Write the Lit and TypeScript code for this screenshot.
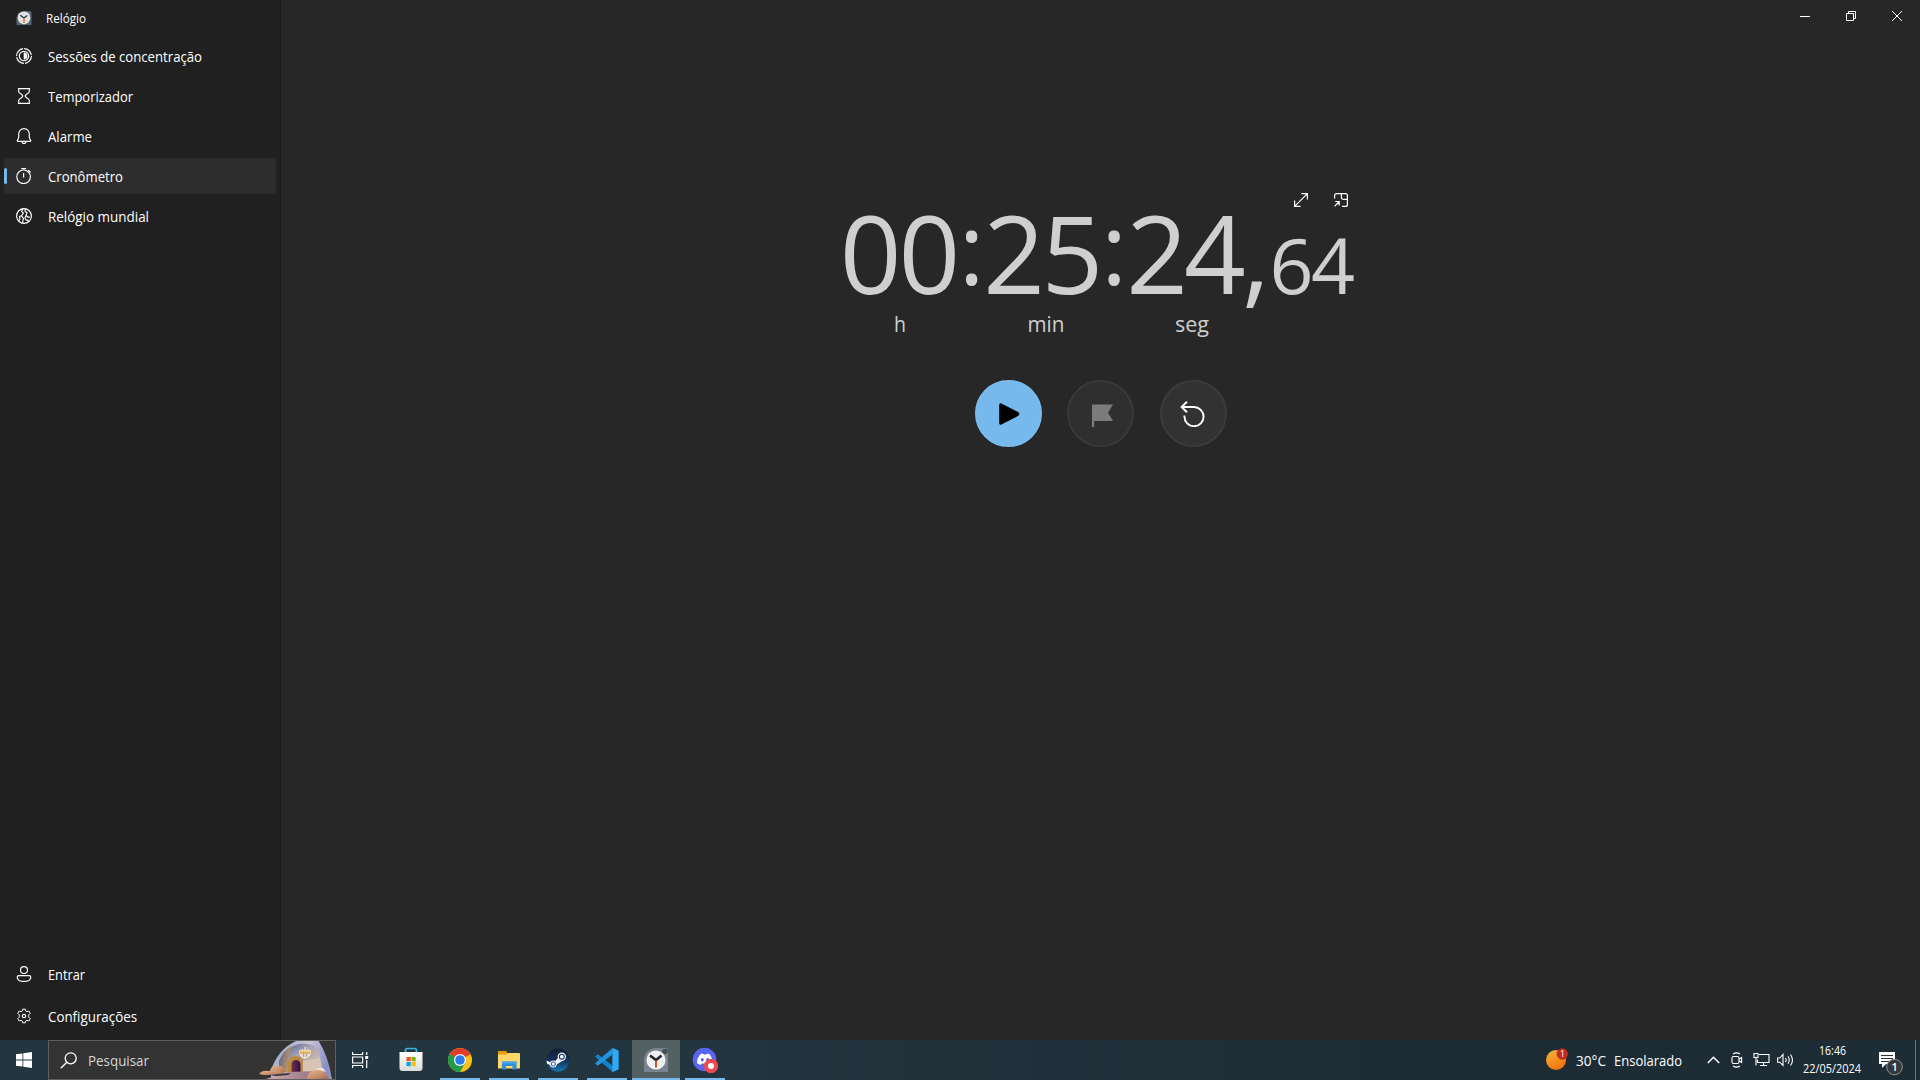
import { LitElement, html, svg, css } from "lit";
import { customElement, property, state } from "lit/decorators.js";
import { classMap } from "lit/directives/class-map.js";

const textStyles = css`
  .tx { display: block; overflow: visible; flex: none; }
  .tx text { font-family: "Open Sans", "Noto Sans", sans-serif; fill: #fff; }
`;

/* A line of text fitted to a fixed advance width. */
const line = (value: string, width: number, size: number) => {
  const h = Math.round(size * 1.4);
  return html`<svg class="tx" width=${width} height=${h}>
    <text x="0" y=${Math.round(size * 1.07)} font-size=${size} textLength=${width} lengthAdjust="spacingAndGlyphs">${value}</text>
  </svg>`;
};

const navIcons: Record<string, unknown> = {
  focus: svg`<circle cx="8" cy="8" r="7.400" stroke-dasharray="10.5 1.1"/><circle cx="8" cy="8" r="4.700"/><path d="M8 4.800a3.200 3.200 0 0 1 0 6.400z" fill="#fff" stroke="#fff" stroke-width=".6"/>`,
  timer: svg`<path d="M2 .6h12M2 15.400h12M2.700.6v2.600q0 1 .8 1.700L6.300 7q1 1 0 2l-2.800 2.100q-.8.700-.8 1.700v2.600M13.300.6v2.600q0 1-.8 1.700L9.700 7q-1 1 0 2l2.800 2.100q.8.700.8 1.700v2.600"/>`,
  alarm: svg`<path d="M8 .6a5.300 5.300 0 0 0-5.300 5.300v3.600L1.300 12.700q-.2.600.5.600h12.400q.7 0 .5-.600L13.300 9.500V5.900A5.300 5.300 0 0 0 8 .6zM6 13.500a2 2 0 0 0 4 0"/>`,
  stopwatch: svg`<circle cx="7.600" cy="8.800" r="6.800"/><path d="M5.300.6h4.800M7.600 5v4.400M12.200 2l2.400 2.400"/>`,
  world: svg`<circle cx="8" cy="8" r="7.400"/><path d="M7 .8 5.600 3.400 7.400 5 5.500 7.800 3.600 8.500 3.800 11 2.700 13M5.500 7.800l1.900 2.500L6.500 15M9.500.8 9 3.300l2 1.500-.9 2.700 2.200 1.900 1.500-.5M10.100 7.500 8.900 10l1.300 2.200 1.600-.2.500 1.700"/>`,
  user: svg`<circle cx="8" cy="4.100" r="3.500"/><path d="M3 9.600h10q1.800 0 1.800 1.600 0 4.200-6.800 4.200T1.200 11.200Q1.200 9.600 3 9.600z"/>`,
  settings: svg`<circle cx="8" cy="8" r="1.700"/><path d="M6.700 1.100h2.600l.5 2 1.100.6 2-.7 1.300 2.300-1.500 1.500v2.400l1.500 1.500-1.300 2.300-2-.7-1.100.6-.5 2H6.700l-.5-2-1.100-.6-2 .7-1.300-2.300 1.500-1.500V6.800L1.800 5.300 3.100 3l2 .7 1.100-.6z" stroke-width=".95"/>`,
};

interface NavEntry { icon: string; text: string; width: number }

@customElement("nav-entry")
class NavEntryElement extends LitElement {
  static styles = [textStyles, css`
    :host { display: block; }
    .row { height: 36px; width: 272px; margin-left: 4px; border-radius: 4px; display: flex; align-items: center; box-sizing: border-box; }
    .row.active { background: #2d2d2d; }
    .mark { width: 3px; height: 16px; border-radius: 1.5px; flex: none; }
    .active .mark { background: #76b9ed; }
    .icon { width: 16px; height: 16px; margin: 0 16px 0 9px; fill: none; stroke: #fff; stroke-width: 1.15; flex: none; }
    .label { padding-top: 2px; }
  `];
  @property({ attribute: false }) entry!: NavEntry;
  @property({ type: Boolean }) active = false;
  render() {
    return html`<div class=${classMap({ row: true, active: this.active })}>
      <span class="mark"></span>
      <svg class="icon" viewBox="0 0 16 16">${navIcons[this.entry.icon]}</svg>
      <div class="label">${line(this.entry.text, this.entry.width, 14)}</div>
    </div>`;
  }
}

@customElement("side-bar")
class SideBar extends LitElement {
  static styles = [textStyles, css`
    :host { display: flex; flex-direction: column; width: 281px; background: #202020; border-right: 1px solid #1d1d1d; flex: none; box-sizing: border-box; }
    .title { height: 38px; display: flex; align-items: flex-start; padding: 10px 0 0 16px; gap: 14px; box-sizing: border-box; }
    .logo { width: 16px; height: 16px; }
    .list { display: flex; flex-direction: column; gap: 4px; }
    .foot { margin-top: auto; display: flex; flex-direction: column; gap: 6px; padding-bottom: 6px; }
  `];
  views: NavEntry[] = [
    { icon: "focus", text: "Sessões de concentração", width: 154 },
    { icon: "timer", text: "Temporizador", width: 85 },
    { icon: "alarm", text: "Alarme", width: 44 },
    { icon: "stopwatch", text: "Cronômetro", width: 75 },
    { icon: "world", text: "Relógio mundial", width: 101 },
  ];
  account: NavEntry[] = [
    { icon: "user", text: "Entrar", width: 37 },
    { icon: "settings", text: "Configurações", width: 89 },
  ];
  @state() current = "Cronômetro";
  render() {
    return html`
      <div class="title">
        <svg class="logo" viewBox="0 0 16 16">
          <path d="M.5 15V8A7.500 7.500 0 0 1 8 1h6q1.500 0 1.500 2v12z" fill="#56646f"/>
          <circle cx="8" cy="7.800" r="6.400" fill="#dfe1e3"/>
          <path d="M4.300 5.300 8 8l3.200-2.500" fill="none" stroke="#2b3036" stroke-width="1.300"/>
          <path d="M8 8v5" stroke="#e0703f" stroke-width="1.500"/>
        </svg>
        ${line("Relógio", 40, 12)}
      </div>
      <div class="list">
        ${this.views.map((e) => html`<nav-entry .entry=${e} ?active=${e.text === this.current}></nav-entry>`)}
      </div>
      <div class="foot">${this.account.map((e) => html`<nav-entry .entry=${e}></nav-entry>`)}</div>`;
  }
}

const glyphs = (value: string, xs: string, width: number, size: number, base = 80) => html`
  <svg class="tx" width=${width} height="96">
    <text class="num" x=${xs} y=${base} font-size=${size} text-anchor="middle">${value}</text>
  </svg>`;

@customElement("stopwatch-view")
class StopwatchView extends LitElement {
  static styles = [textStyles, css`
    :host { display: flex; flex-direction: column; flex: 1; background: #272727; }
    .caption { display: flex; justify-content: flex-end; height: 153px; }
    .caption svg { width: 46px; height: 32px; fill: none; stroke: #fff; stroke-width: 1; }
    .watch { width: 519px; margin: 0 auto; display: flex; flex-direction: column; }
    .tools { display: flex; justify-content: flex-end; gap: 26px; height: 61px; padding-right: 12px; box-sizing: border-box; align-items: flex-end; }
    .tools svg { width: 14px; height: 14px; margin-bottom: 7px; fill: none; stroke: #fff; stroke-width: 1.2; }
    .digits { display: flex; height: 96px; }
    .tx .num, .tx .unit { fill: #cfcfcf; }
    .units { display: flex; margin-left: -14.5px; }
    .controls { display: flex; gap: 25.5px; justify-content: center; padding: 36px 0 0 0; }
    .btn { width: 67px; height: 67px; border-radius: 50%; box-sizing: border-box; background: #323232; border: 2px solid #3b3b3b; display: flex; align-items: center; justify-content: center; padding: 0; flex: none; }
    .btn svg { width: 26px; height: 26px; flex: none; }
    .play { background: #76b9ed; border-color: #7abbed; }
    .lap { background: #2f2f2f; border-color: #393939; }
  `];
  render() {
    return html`
      <div class="caption">
        <svg viewBox="0 0 46 32"><path d="M18 16.500h10"/></svg>
        <svg viewBox="0 0 46 32"><path d="M18.500 13.500h7v7h-7zM20.500 13.500v-2h7v7h-2"/></svg>
        <svg viewBox="0 0 46 32"><path d="m18 11 10 10M28 11 18 21"/></svg>
      </div>
      <div class="watch">
        <div class="tools">
          <svg viewBox="0 0 14 14"><path d="M.6 13.400 13.400.6M7.400.6h6v6M.6 7.400v6h6"/></svg>
          <svg viewBox="0 0 14 14"><path d="M.6 5.500V2.600q0-2 2-2h8.800q2 0 2 2v8.800q0 2-2 2H8M7.400.6v4q0 1.800 1.800 1.800h4.200M1.200 8.500h4v4M5.200 8.500.6 13.400"/></svg>
        </div>
        <div class="digits">
          ${glyphs("00", "29.5 88.5", 118, 108)}
          ${glyphs(":", "12.5", 25, 98, 71)}
          ${glyphs("25", "30 88.5", 118, 108)}
          ${glyphs(":", "12", 25, 98, 71)}
          ${glyphs("24", "30 88", 118, 108)}
          ${glyphs(",", "11", 26, 108)}
          ${glyphs("64", "20.5 62", 83, 77)}
        </div>
        <div class="units">
          ${[["h", 12], ["min", 37], ["seg", 34]].map(([u, w]) => html`
            <svg class="tx" width="146" height="34"><text class="unit" x=${73 - Number(w) / 2} y="22" font-size="22.5" textLength=${w} lengthAdjust="spacingAndGlyphs">${u}</text></svg>`)}
        </div>
        <div class="controls">
          <button class="btn play"><svg viewBox="0 0 26 26"><path d="M4.200 3.900v18.200q0 2.400 2.200 1.400l17-8.800q1.800-1.700 0-3.400L6.400 2.500Q4.200 1.500 4.200 3.900z"/></svg></button>
          <button class="btn lap"><svg viewBox="0 0 26 26"><path d="M4 3.500h21l-5 8.300 5 8.200H6.200v7.700H4z" fill="#7b7b7b"/></svg></button>
          <button class="btn reset"><svg viewBox="0 0 26 26" fill="none" stroke="#fff" stroke-width="1.900"><path d="M7 .8 1.600 6 7 11.200M1.600 6H14a9.600 9.600 0 1 1-9.600 9.600v-1"/></svg></button>
        </div>
      </div>`;
  }
}

const appIcons: Record<string, unknown> = {
  store: svg`<defs><linearGradient id="s" x2="0" y2="1"><stop stop-color="#fff"/><stop offset="1" stop-color="#dcdcdc"/></linearGradient></defs>
    <path d="M7.500 6V3.500q0-2 2-2h7q2 0 2 2V6" fill="none" stroke="#35b8ea" stroke-width="1.700"/>
    <path d="M1.500 5h23v16q0 3-3 3h-17q-3 0-3-3z" fill="url(#s)"/>
    <path d="M8.500 10h4.200v4.200H8.500z" fill="#f25022"/><path d="M13.500 10h4.200v4.200h-4.200z" fill="#7fba00"/>
    <path d="M8.500 15h4.200v4.200H8.500z" fill="#00a4ef"/><path d="M13.500 15h4.200v4.200h-4.200z" fill="#ffb900"/>`,
  chrome: svg`<circle cx="13" cy="13" r="12" fill="#fbc116"/>
    <path d="M13 13 2.600 7A12 12 0 0 1 23.400 7z" fill="#e33b2e"/><path d="M13 7h10.400L13 13z" fill="#e33b2e"/>
    <path d="M2.600 7A12 12 0 0 0 13 25l5.200-9L13 13z" fill="#229a49"/><path d="M2.600 7 7.800 16 13 13z" fill="#229a49"/>
    <circle cx="13" cy="13" r="6" fill="#fff"/><circle cx="13" cy="13" r="4.800" fill="#2a7af0"/>`,
  files: svg`<path d="M2 4h8l1.500 2H22q1 0 1 1v4H2z" fill="#e29b0d"/><path d="M2 7.500h8.500L12 6h11q1 0 1 1v14.500H2z" fill="#ffd667"/>
    <path d="M6 22.500v-8h14.500v8h-4V19h-6.500v3.500z" fill="#2f8fdc"/><path d="M6 14.500h14.500v2H6z" fill="#46a9ee"/>`,
  steam: svg`<defs><linearGradient id="m" x2="0" y2="1"><stop stop-color="#131b34"/><stop offset=".55" stop-color="#12345c"/><stop offset="1" stop-color="#1679b5"/></linearGradient></defs>
    <circle cx="13" cy="13" r="11.500" fill="url(#m)"/><path d="M1.600 13.600 8 16.500l5.400-5.900 5.400 2.500-7 4.500A3.600 3.600 0 0 1 5 18L1.900 16.500z" fill="#f3f5f8"/>
    <circle cx="16.800" cy="9.700" r="4.200" fill="#f3f5f8"/><circle cx="16.800" cy="9.700" r="2.400" fill="#f3f5f8" stroke="#17345b" stroke-width="1.100"/>
    <circle cx="8.300" cy="17" r="3.400" fill="#f3f5f8"/><circle cx="8.300" cy="17" r="2.100" fill="none" stroke="#1b4d7d" stroke-width=".9"/>`,
  code: svg`<path d="M18.500 1 24.500 3.800v18.400L18.500 25 1 9.500 3.800 7.200 18.500 18.600z" fill="#1583cc"/>
    <path d="M18.500 1v6.500L3.800 18.800 1 16.600z" fill="#2196df"/><path d="M18.500 1 24.500 3.800v18.400L18.500 25z" fill="#30aaf2"/>`,
  clock: svg`<path d="M1 25V13A12 12 0 0 1 13 1h9q3 0 3 3v21z" fill="#79858e"/><circle cx="22" cy="4.500" r="2.800" fill="#464f56"/>
    <circle cx="13" cy="13" r="9.600" fill="#f0f1f2"/><path d="M7 8.500 13 13l5.500-4.500" fill="none" stroke="#23282d" stroke-width="2.600"/>
    <path d="M13 13.500v7" stroke="#dc4c1e" stroke-width="2"/>`,
  discord: svg`<circle cx="12.500" cy="12.500" r="11.800" fill="#5865f2"/>
    <path d="M8 7.500q2-.9 3-1l.6 1h2.800l.6-1q1 .1 3 1 2.700 4 2.500 8.500-1.800 1.500-3.700 2l-1-1.600H9.700L8.700 18q-2-.5-3.700-2Q4.800 11.500 8 7.500z" fill="#fff"/>
    <ellipse cx="10.300" cy="12.700" rx="1.500" ry="1.700" fill="#5865f2"/><ellipse cx="15.600" cy="12.700" rx="1.500" ry="1.700" fill="#5865f2"/>
    <circle cx="19" cy="19" r="7.200" fill="#ee4a4e"/><circle cx="19" cy="19" r="3" fill="#fff"/>`,
};

@customElement("task-bar")
class TaskBar extends LitElement {
  static styles = [textStyles, css`
    :host { display: flex; height: 40px; background: linear-gradient(90deg, #23363f 0%, #23363f 30%, #20303a 55%, #1d2b34 75%, #1d2c35 100%); }
    .cell { height: 40px; display: flex; align-items: center; justify-content: center; flex: none; }
    .w48 { width: 48px; }
    .w24 { width: 24px; }
    .line { fill: none; stroke: #fff; }
    .search { width: 288px; height: 40px; box-sizing: border-box; border: 1px solid #606060; background: #333; display: flex; align-items: center; flex: none; padding-left: 11px; overflow: hidden; }
    .search .lens { width: 17px; height: 17px; margin-right: 11px; stroke-width: 1.3; }
    .search .tx text { fill: #d5d5d5; }
    .art { width: 76px; height: 38px; margin-left: auto; margin-right: 1px; flex: none; }
    .apps { display: flex; gap: 1px; margin-left: 3px; }
    .app { width: 48px; height: 40px; box-sizing: border-box; display: flex; justify-content: center; align-items: center; background: linear-gradient(#76b9ed, #76b9ed) center bottom / 40px 2px no-repeat; }
    .app.idle { background: none; }
    .app.current { background: linear-gradient(#76b9ed, #76b9ed) center bottom / 48px 2px no-repeat, #536163; }
    .app svg { width: 26px; height: 26px; }
    .right { margin-left: auto; display: flex; }
    .weather { width: 156px; height: 40px; display: flex; align-items: center; }
    .weather svg.sun { width: 24px; height: 24px; margin-right: 7px; flex: none; }
    .weather .temp { margin-right: 8px; }
    .sun text { font: 8.5px "Open Sans", sans-serif; fill: #fff; }
    .date { width: 70px; display: flex; flex-direction: column; align-items: center; padding-top: 2px; gap: 1px; box-sizing: border-box; height: 40px; }
    .note { width: 48px; height: 40px; }
    .note text { font: 600 11px "Open Sans", sans-serif; fill: #fff; }
    .edge { width: 4px; height: 40px; border-left: 1px solid #6d777d; }
  `];
  apps = [["store", "idle"], ["chrome", ""], ["files", ""], ["steam", ""], ["code", ""], ["clock", "current"], ["discord", ""]];
  render() {
    return html`
      <div class="cell w48"><svg width="16" height="16" viewBox="0 0 16 16" fill="#fff"><path d="M0 2.300 6.500 1.400v6.200H0zM7.300 1.300 16 0v7.600H7.300zM0 8.400h6.500v6.200L0 13.700zM7.300 8.400H16V16l-8.700-1.300z"/></svg></div>
      <div class="search">
        <svg class="lens line" viewBox="0 0 17 17"><circle cx="10.700" cy="6.300" r="5.500"/><path d="M6.800 10.200.8 16.200"/></svg>
        ${line("Pesquisar", 61, 15)}
        <svg class="art" viewBox="0 0 76 38">
          <defs>
            <linearGradient id="arch" x2="1" y2=".3"><stop stop-color="#98a4bd"/><stop offset=".6" stop-color="#c6c4d8"/><stop offset="1" stop-color="#8a91c4"/></linearGradient>
            <linearGradient id="wall" x2="1" y2="1"><stop stop-color="#3c558c"/><stop offset=".4" stop-color="#a8a2b2"/><stop offset="1" stop-color="#dfc9b2"/></linearGradient>
            <linearGradient id="side" x2="1" y2=".4"><stop stop-color="#4e6290"/><stop offset="1" stop-color="#c99a5e"/></linearGradient>
            <linearGradient id="rock" x2="1" y2="1"><stop stop-color="#edbb93"/><stop offset="1" stop-color="#a8684c"/></linearGradient>
            <linearGradient id="floor" x2="1"><stop stop-color="#cfa9a8"/><stop offset="1" stop-color="#8d6a80"/></linearGradient>
            <linearGradient id="door" x2="1"><stop stop-color="#75304a"/><stop offset="1" stop-color="#291149"/></linearGradient>
          </defs>
          <path d="M13 29Q20 9 36 1L40-1H60Q70 14 74 38H13z" fill="url(#arch)"/>
          <path d="M22 31V19Q28 6 41 3q15-2 20 7l3 22z" fill="url(#wall)"/>
          <path d="M21 31V20q4-11 13-15Q29 15 30 31z" fill="url(#side)"/>
          <path d="M44 20 62 17l3 14H44z" fill="#d9c3b5"/>
          <path d="M30 32V21q1-6 7.500-6t7.500 6v11z" fill="#b98a45"/>
          <path d="M33.500 32V23q1-4 4.500-4t4.500 4v9z" fill="url(#door)"/>
          <path d="M8 38 30 31l31-1 5 8z" fill="url(#floor)"/>
          <g fill="none" stroke="#fff0cc" stroke-width="1.100"><path d="M41 10h12M41.500 10q0 6 5.500 7 5.500-1 5.500-7M47 6v11M44 8v8M50 8v8"/></g>
          <path d="M41.500 11.500h11" stroke="#e6aa26" stroke-width="1.500"/>
          <path d="M12 30q1-6 8-5 7 0 7 5l-3 3H10z" fill="url(#rock)"/>
          <path d="M1 33q3-4 10-3l7-1 10 3q2 2-3 2H5z" fill="url(#rock)"/><path d="M11 34 33 32l-3 2-12 1z" fill="#36333e"/>
          <path d="M49 37q1-7 9-8 9-1 13 9H49z" fill="url(#rock)"/><path d="m56 28 9-1 3 4-6-2z" fill="#f5e6e3"/>
        </svg>
      </div>
      <div class="cell w48"><svg class="line" width="17" height="16" viewBox="0 0 17 16" stroke-width="1.2"><path d="M.6 0v2.500h10V0M.6 5h10v6H.6zM.6 16v-2.500h10V16M14.700 0v3M14.700 8v8"/><path d="M13.200 4h3v3h-3z" fill="#fff" stroke="none"/></svg></div>
      <div class="apps">
        ${this.apps.map(([id, mode]) => html`<div class=${classMap({ app: true, idle: mode === "idle", current: mode === "current" })}>
          <svg viewBox="0 0 26 26">${appIcons[id]}</svg></div>`)}
      </div>
      <div class="right">
        <div class="weather">
          <svg class="sun" viewBox="0 0 24 24"><defs><linearGradient id="o" x2=".5" y2="1"><stop stop-color="#f5b83c"/><stop offset="1" stop-color="#f4720f"/></linearGradient></defs>
            <circle cx="11" cy="12" r="10" fill="url(#o)"/><circle cx="17.300" cy="6" r="5.700" fill="#c42b1c"/><text x="15" y="9.200">1</text></svg>
          <div class="temp">${line("30°C", 30, 14.5)}</div>
          ${line("Ensolarado", 68, 14.5)}
        </div>
        <div class="cell w24"><svg class="line" width="13" height="8" viewBox="0 0 13 8" stroke-width="1.5"><path d="M.8 7 6.500 1.300 12.200 7"/></svg></div>
        <div class="cell w24"><svg class="line" width="12" height="16" viewBox="0 0 12 16" stroke-width="1.1"><rect x="1" y="4.500" width="7" height="7" rx="1.500"/><path d="m8 7.200 2.600-1.700v5L8 8.800M2 2Q5.500-.2 9 2M2 14q3.500 2.200 7 0"/></svg></div>
        <div class="cell w24"><svg class="line" width="17" height="16" viewBox="0 0 17 16" stroke-width="1.1"><path d="M6 2.500h10v8H4.500v-3M10.500 10.500v3M7 13.500h7M1 1.500h4v4H1zM3 5.500v8"/></svg></div>
        <div class="cell w24"><svg class="line" width="17" height="14" viewBox="0 0 17 14" stroke-width="1.1"><path d="M.6 5h2.200L6 1.500v11L2.800 9.200H.6zM8.500 5q1.300 2 0 4M11 3.300q2.500 3.700 0 7.400M13.500 1.500q4 5.500 0 11"/></svg></div>
        <div class="date">${line("16:46", 27, 12)}${line("22/05/2024", 58, 12)}</div>
        <svg class="note" viewBox="0 0 48 40"><path d="M12 12h16v12H19l-4 4v-4h-3z" fill="#fff"/><path d="M14 15.500h12M14 18.500h12M14 21.500h8" stroke="#26343c"/>
          <circle cx="27.500" cy="27" r="7.800" fill="#33383c" stroke="#8e9496"/><text x="24.500" y="31">1</text></svg>
        <div class="edge"></div>
      </div>`;
  }
}

@customElement("app-root")
class AppRoot extends LitElement {
  static styles = css`
    :host { display: flex; flex-direction: column; width: 1920px; height: 1080px; overflow: hidden; background: #272727; }
    .window { display: flex; flex: 1; min-height: 0; }
  `;
  render() {
    return html`<div class="window"><side-bar></side-bar><stopwatch-view></stopwatch-view></div><task-bar></task-bar>`;
  }
}
